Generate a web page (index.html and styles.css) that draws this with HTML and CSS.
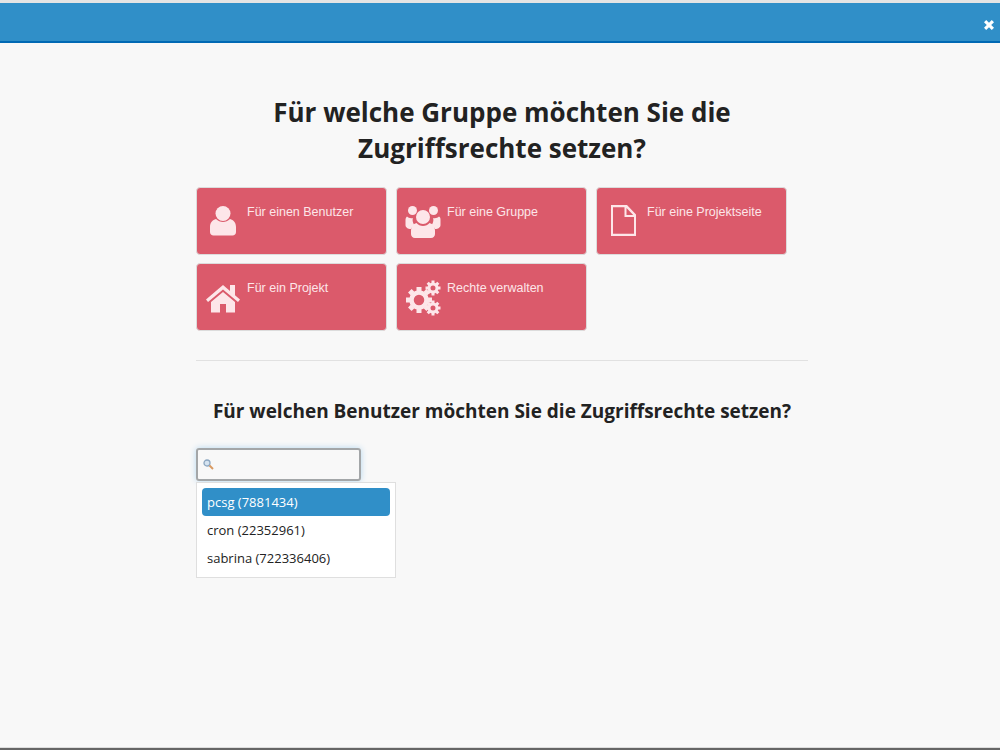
FILE: index.html
```html
<!DOCTYPE html>
<html lang="de">
<head>
    <meta charset="UTF-8">
    <title>Zugriffsrechte</title>
    <link rel="stylesheet" href="styles.css">
</head>
<body>
    <div class="topstrip"></div>
    <header class="titlebar">
        <svg class="close" viewBox="0 0 12 12"><path d="M1 3.2 3.2 1 6 3.8 8.8 1 11 3.2 8.2 6 11 8.8 8.8 11 6 8.2 3.2 11 1 8.8 3.8 6Z"/></svg>
    </header>

    <main class="content">
        <h1>Für welche Gruppe möchten Sie die<br>Zugriffsrechte setzen?</h1>

        <div class="tiles">
            <a class="tile">
                <svg class="tile-icon" viewBox="0 0 36 36"><circle cx="18" cy="9.5" r="7.5"/><path d="M11 15c2 2 4.500 3 7 3s5-1 7-3c3.500 1 6 3.500 6 8v5c0 2-1.500 3.500-3.500 3.500h-19C6.500 31.500 5 30 5 28v-5c0-4.500 2.500-7 6-8Z"/></svg>
                <span>Für einen Benutzer</span>
            </a>
            <a class="tile">
                <svg class="tile-icon" viewBox="0 0 36 36"><circle cx="7.500" cy="6.500" r="4.500"/><circle cx="28.500" cy="6.500" r="4.500"/><path d="M2 12.500c1.500 1.500 3.500 2 5.800 1.500-.6 3 .3 5.500 2 7.500-2 1-3.300 2.300-4 3.500C3 25 .5 23.500.5 21v-5c0-1.500.5-2.700 1.500-3.500ZM34 12.500c1.500 1 1.500 2 1.500 3.500v5c0 2.500-2.500 4-5.300 4-.7-1.200-2-2.500-4-3.500 1.700-2 2.600-4.500 2-7.500 2.300.5 4.300 0 5.800-1.500Z"/><circle cx="18" cy="13" r="7"/><path d="M11.500 19c1.500 2 4 3 6.500 3s5-1 6.500-3c3.500 1 5.500 3.500 5.500 7.500V30c0 2.300-1.500 4-4 4H10c-2.500 0-4-1.700-4-4v-3.500c0-4 2-6.500 5.500-7.500Z"/></svg>
                <span>Für eine Gruppe</span>
            </a>
            <a class="tile">
                <svg class="tile-icon" viewBox="0 0 36 36"><path fill-rule="evenodd" d="M6 1h16l9 9.500V32H6ZM8 3.200v26.600h21V13h-9.500V3.200ZM21.500 4v7h6.700Z"/></svg>
                <span>Für eine Projektseite</span>
            </a>
            <a class="tile">
                <svg class="tile-icon" viewBox="0 0 36 36"><path d="M18 5 1 19.500 3 22 18 9.500 33 22l2-2.500-5-4.300V5h-5v6Z"/><path d="M18 12 6 22v10.500h9V24h6v8.500h9V22Z"/></svg>
                <span>Für ein Projekt</span>
            </a>
            <a class="tile">
                <svg class="tile-icon" viewBox="0 0 36 36">
                    <g class="gear" transform="translate(14 20)"><circle r="7.500" stroke-width="4.500" fill="none"/><path d="M-2.500-13h5v4h-5zM-2.500 9h5v4h-5zM-13-2.500h4v5h-4zM9-2.500h4v5H9z"/><path transform="rotate(45)" d="M-2.500-13h5v4h-5zM-2.500 9h5v4h-5zM-13-2.500h4v5h-4zM9-2.500h4v5H9z"/></g>
                    <g class="gear" transform="translate(28 8)"><circle r="4" stroke-width="3" fill="none"/><path d="M-1.500-7.500h3v3h-3zM-1.500 4.500h3v3h-3zM-7.500-1.500h3v3h-3zM4.500-1.500h3v3h-3z"/><path transform="rotate(45)" d="M-1.500-7.500h3v3h-3zM-1.500 4.500h3v3h-3zM-7.500-1.500h3v3h-3zM4.500-1.500h3v3h-3z"/></g>
                    <g class="gear" transform="translate(28 28)"><circle r="4" stroke-width="3" fill="none"/><path d="M-1.500-7.500h3v3h-3zM-1.500 4.500h3v3h-3zM-7.500-1.500h3v3h-3zM4.500-1.500h3v3h-3z"/><path transform="rotate(45)" d="M-1.500-7.500h3v3h-3zM-1.500 4.500h3v3h-3zM-7.500-1.500h3v3h-3zM4.500-1.500h3v3h-3z"/></g>
                </svg>
                <span>Rechte verwalten</span>
            </a>
        </div>

        <hr class="divider">

        <h2>Für welchen Benutzer möchten Sie die Zugriffsrechte setzen?</h2>

        <div class="search">
            <div class="search-box">
                <svg class="search-icon" viewBox="0 0 11 11"><circle cx="4" cy="4" r="3" fill="#d5e3f0" stroke="#8ba6c0" stroke-width="1.300"/><path d="M6.500 6.500 10 10" stroke="#d99a62" stroke-width="2"/></svg>
            </div>
            <ul class="results">
                <li class="active">pcsg (7881434)</li>
                <li>cron (22352961)</li>
                <li>sabrina (722336406)</li>
            </ul>
        </div>
    </main>
    <div class="bottomline"></div>
</body>
</html>
```
FILE: styles.css
```css
html, body {
    height: 100%;
}

body {
    margin: 0;
    height: 750px;
    overflow: hidden;
    display: flex;
    flex-direction: column;
    background: #f8f8f8;
    color: #222;
    font-family: "Open Sans", sans-serif;
}

.topstrip {
    height: 3px;
    background: #e4e4e4;
}

.titlebar {
    height: 38px;
    display: flex;
    align-items: center;
    justify-content: flex-end;
    padding-right: 5px;
    background: #308fc8;
    border-bottom: 2px solid #0069b4;
}

.close {
    width: 12px;
    height: 12px;
    margin-top: 5px;
    fill: #fff;
}

.content {
    flex: 1;
    width: 612px;
    margin-left: 196px;
}

h1 {
    margin: 51px 0 21px;
    font-size: 26px;
    line-height: 36px;
    font-weight: 700;
    text-align: center;
}

.tiles {
    display: grid;
    grid-template-columns: repeat(3, 191px);
    grid-auto-rows: 68px;
    gap: 8px 9px;
}

.tile {
    display: flex;
    box-sizing: border-box;
    padding: 16px 8px;
    background: #db5a6b;
    border: 1px solid #dcdcdc;
    border-radius: 4px;
    color: #fde6e9;
    font-family: "Liberation Sans", Arial, sans-serif;
    font-size: 12.500px;
    line-height: 17px;
}

.tile-icon {
    flex: none;
    width: 36px;
    height: 36px;
    margin-right: 6px;
    fill: #fde6e9;
    stroke: none;
}

.gear {
    stroke: #fde6e9;
}

.gear path {
    stroke: none;
}

.divider {
    height: 1px;
    margin: 29px 0 0;
    border: 0;
    background: #e1e1e1;
}

h2 {
    margin: 37px 0 24px;
    font-size: 19px;
    line-height: 26px;
    font-weight: 700;
    text-align: center;
}

.search {
    width: 200px;
}

.search-box {
    box-sizing: border-box;
    display: flex;
    align-items: center;
    width: 165px;
    height: 33px;
    padding-left: 5px;
    border: 2px solid #a3a6a8;
    border-radius: 3px;
    box-shadow: 0 0 6px #b5d8f0;
}

.search-icon {
    width: 11px;
    height: 11px;
}

.results {
    box-sizing: border-box;
    list-style: none;
    margin: 1px 0 0;
    padding: 5px;
    height: 96px;
    background: #fff;
    border: 1px solid #dfdfdf;
    font-size: 13px;
}

.results li {
    height: 28px;
    line-height: 28px;
    padding-left: 5px;
}

.results .active {
    background: #308fc8;
    border-radius: 4px;
    color: #fff;
}

.bottomline {
    height: 2px;
    background: #666;
    border-top: 1px solid #ddd;
}
```
